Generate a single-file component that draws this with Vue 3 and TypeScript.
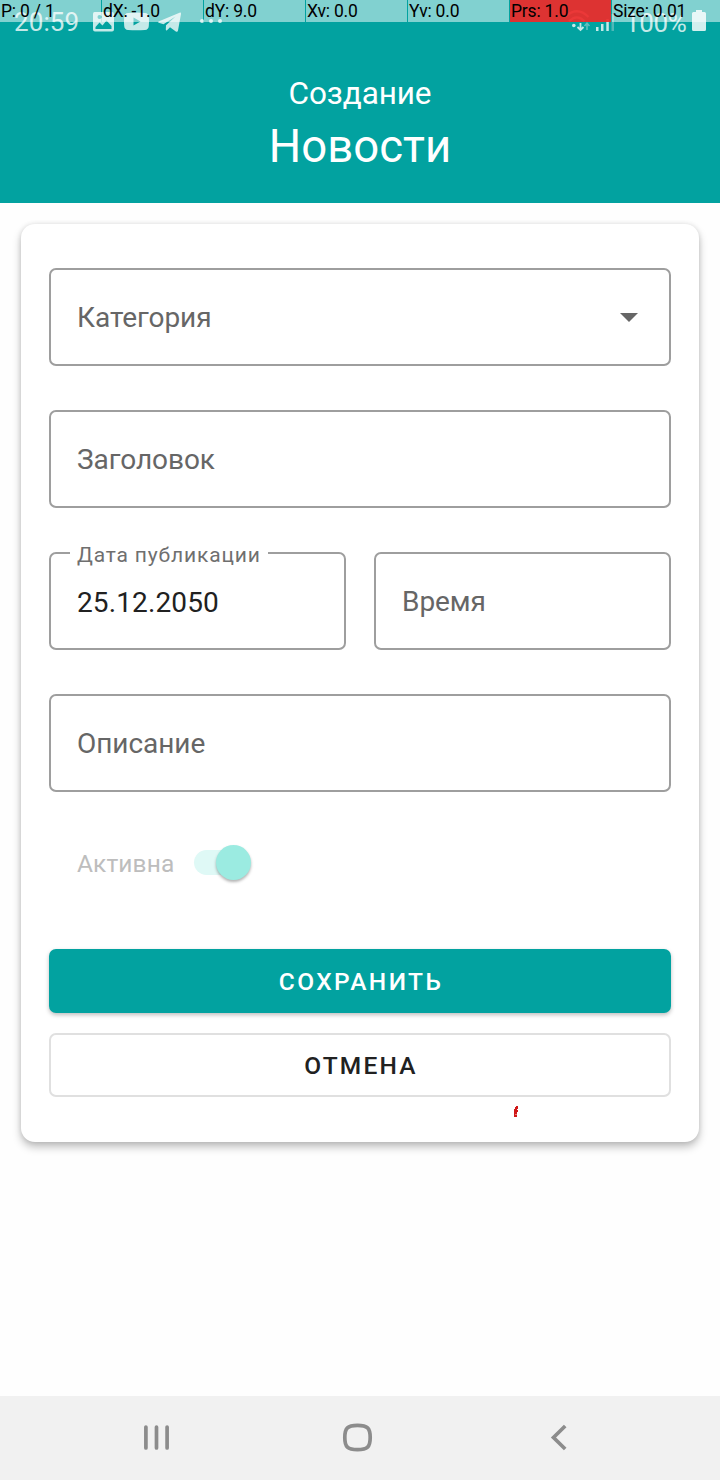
<script setup lang="ts">
interface Metric {
  text: string
  alert?: boolean
}

const metrics: Metric[] = [
  { text: 'P: 0 / 1' },
  { text: 'dX: -1.0' },
  { text: 'dY: 9.0' },
  { text: 'Xv: 0.0' },
  { text: 'Yv: 0.0' },
  { text: 'Prs: 1.0', alert: true },
  { text: 'Size: 0.01' },
]
</script>

<template>
  <div class="screen">
    <header class="header">
      <div class="status">
        <span class="clock">20:59</span>
        <svg class="status-left" width="140" height="40" viewBox="90 0 140 40">
          <path
            fill="#c4e9e8"
            fill-rule="evenodd"
            d="M94.500 12H112Q114 12 114 14V29.500Q114 31.500 112 31.500H95Q93 31.500 93 29.500V14Q93 12 94.500 12ZM95.500 29H111.500V26L106.500 20.500L102.500 25.500L99.500 22.500L95.500 27ZM99.500 15A2 2 0 1 0 99.500 19A2 2 0 1 0 99.500 15Z"
          />
          <path
            fill="#c4e9e8"
            fill-rule="evenodd"
            d="M128 13Q136.500 12 145 13Q148.500 13.300 148.800 17Q149.200 21.500 148.800 26Q148.500 29.700 145 30Q136.500 30.700 128 30Q124.500 29.700 124.200 26Q123.800 21.500 124.200 17Q124.500 13.300 128 13ZM133.500 17.500V25.500L140.500 21.500Z"
          />
          <path
            fill="#c4e9e8"
            d="M158.500 21.500L179.500 12.700Q181.300 12 181 14L178 30.500Q177.500 32.500 175.800 31.400L170 27.300L167 30.300Q166 31 165.800 29.500L166 25.300L175.500 16.600L163.500 24.300L158.700 22.800Q157.500 22.200 158.500 21.500Z"
          />
          <circle cx="202" cy="21" r="2" fill="#c4e9e8" />
          <circle cx="211" cy="21" r="2" fill="#c4e9e8" />
          <circle cx="220" cy="21" r="2" fill="#c4e9e8" />
        </svg>
        <svg class="status-signal" width="50" height="40" viewBox="566 0 50 40">
          <g fill="none" stroke="#c4e9e8" stroke-width="2.300">
            <path d="M565 17Q577 5.500 588.500 17" />
            <path d="M569 21.300Q577 13.500 584.500 21.300" />
          </g>
          <circle cx="573.800" cy="25.500" r="1.800" fill="#c4e9e8" />
          <path d="M580.500 23V30M577.500 27L580.500 30L583.500 27" fill="none" stroke="#c4e9e8" stroke-width="1.800" />
          <path d="M587 30V23M584.500 26L587 23.300L589.500 26" fill="none" stroke="#5fbfbe" stroke-width="1.600" />
          <path
            d="M596 27H598.500V31H596ZM601 24H603.500V31H601ZM606.300 19H608.800V31H606.300Z"
            fill="#c4e9e8"
          />
          <path d="M611.500 14H614V31H611.500Z" fill="#4fb9b8" />
        </svg>
        <span class="percent">100%</span>
        <svg class="battery" width="14" height="24" viewBox="0 0 14 24">
          <path d="M4 1H10V3H12.500Q14 3 14 4.500V20.500Q14 22 12.500 22H1.500Q0 22 0 20.500V4.500Q0 3 1.500 3H4Z" fill="#d3efee" />
        </svg>
      </div>
      <h1 class="heading">
        <span class="overline">Создание</span>
        <span class="title">Новости</span>
      </h1>
    </header>

    <div class="pointer-bar">
      <span v-for="m in metrics" :key="m.text" class="metric" :class="{ alert: m.alert }">{{ m.text }}</span>
    </div>

    <main class="content">
      <form class="card" @submit.prevent>
        <div class="field">
          <span class="hint">Категория</span>
          <svg class="caret" width="18" height="9" viewBox="0 0 18 9">
            <path d="M0 0H18L9 9Z" fill="#666" />
          </svg>
        </div>
        <div class="field"><span class="hint">Заголовок</span></div>
        <div class="row">
          <div class="field">
            <span class="label">Дата публикации</span>
            <span class="value">25.12.2050</span>
          </div>
          <div class="field"><span class="hint">Время</span></div>
        </div>
        <div class="field"><span class="hint">Описание</span></div>
        <div class="switch-row">
          <span class="switch-label">Активна</span>
          <span class="track"><span class="thumb"></span></span>
        </div>
        <button class="button primary" type="submit">СОХРАНИТЬ</button>
        <button class="button outlined" type="button">ОТМЕНА</button>
        <svg class="trace" width="6" height="13" viewBox="0 0 6 13" shape-rendering="crispEdges">
          <path d="M2 1H4V4H3V5H4V7H3V12H0V4H1V2H2Z" fill="#d01818" />
          <path d="M1 9H3V10H1Z" fill="#ee7777" />
        </svg>
      </form>
    </main>

    <nav class="nav">
      <svg width="720" height="84" viewBox="0 0 720 84" fill="none" stroke="#8c8c8c" stroke-width="3.700" stroke-linecap="round">
        <path d="M145.900 31V52M156.500 31V52M167.100 31V52" />
        <path d="M357.500 29.300C367.500 29.300 370.200 32 370.200 41.500C370.200 51 367.500 53.700 357.500 53.700C347.500 53.700 344.800 51 344.800 41.500C344.800 32 347.500 29.300 357.500 29.300Z" />
        <path d="M565.200 30L553.500 41.500L565.200 53" stroke-linecap="butt" />
      </svg>
    </nav>
  </div>
</template>

<style>
body {
  margin: 0;
  background: #fff;
}
</style>

<style scoped>
.screen {
  position: relative;
  display: flex;
  flex-direction: column;
  width: 720px;
  height: 1480px;
  overflow: hidden;
  background: #fefefe;
  font-family: Roboto, "Noto Sans", sans-serif;
}
.header {
  height: 203px;
  background: #02a2a0;
  color: #fff;
}
.status {
  position: relative;
  height: 42px;
  color: #c4e9e8;
  font-size: 26px;
  line-height: 30px;
}
.clock,
.percent,
.status-left,
.status-signal,
.battery {
  position: absolute;
  top: 0;
}
.clock {
  left: 14px;
  top: 7px;
  letter-spacing: 0.1px;
}
.status-left {
  left: 90px;
}
.status-signal {
  left: 566px;
}
.percent {
  left: 625px;
  top: 8px;
  letter-spacing: -0.4px;
}
.battery {
  left: 692px;
  top: 9px;
}
.heading {
  display: flex;
  flex-direction: column;
  align-items: center;
  margin: 0;
  padding-top: 33px;
  font-weight: 400;
}
.overline {
  font-size: 31.5px;
  line-height: 38px;
  letter-spacing: -0.1px;
}
.title {
  margin-top: 7px;
  font-size: 45.5px;
  line-height: 54px;
}
.pointer-bar {
  position: absolute;
  top: 0;
  left: 0;
  display: flex;
  gap: 1px;
  width: 720px;
  height: 22px;
}
.metric {
  box-sizing: border-box;
  flex: 0 0 101px;
  padding-left: 1px;
  background: rgba(255, 255, 255, 0.5);
  color: #000;
  font-size: 17.5px;
  line-height: 22px;
  letter-spacing: -0.2px;
  white-space: nowrap;
}
.metric:last-child {
  flex: 1;
}
.metric.alert {
  background: rgba(238, 42, 42, 0.93);
}
.content {
  flex: 1;
  padding: 21px 21px 0;
}
.card {
  position: relative;
  box-sizing: border-box;
  height: 918px;
  padding: 44px 28px 0;
  border-radius: 14px;
  background: #fff;
  box-shadow: 0 5px 9px rgba(0, 0, 0, 0.25), 0 0 5px rgba(0, 0, 0, 0.1);
}
.field {
  position: relative;
  box-sizing: border-box;
  display: flex;
  flex: 1;
  align-items: center;
  justify-content: space-between;
  height: 98px;
  margin-bottom: 44px;
  padding: 0 31px 0 26px;
  border: 2px solid #9e9e9e;
  border-radius: 7px;
}
.row {
  display: flex;
  gap: 28px;
}
.hint,
.value {
  padding-top: 2px;
  font-size: 28px;
  line-height: 34px;
}
.hint {
  color: #666;
  letter-spacing: -0.05px;
}
.value {
  padding-top: 4px;
  color: #212121;
  letter-spacing: 0.12px;
}
.label {
  position: absolute;
  top: -12px;
  left: 19px;
  padding: 0 7px;
  background: #fff;
  color: #6f6f6f;
  font-size: 21px;
  line-height: 26px;
  letter-spacing: 0.84px;
  white-space: nowrap;
}
.switch-row {
  display: flex;
  align-items: center;
  height: 54px;
  padding-left: 28px;
}
.switch-label {
  width: 117px;
  color: #bdbdbd;
  font-size: 24.5px;
  letter-spacing: 0.1px;
}
.track {
  position: relative;
  top: -1px;
  width: 56px;
  height: 25px;
  border-radius: 13px;
  background: #dff9f6;
}
.thumb {
  position: absolute;
  top: -5px;
  right: -1px;
  width: 35px;
  height: 35px;
  border-radius: 50%;
  background: #9bebe1;
  box-shadow: 0 2px 3px rgba(0, 0, 0, 0.3);
}
.button {
  box-sizing: border-box;
  display: block;
  width: 100%;
  height: 64px;
  padding: 0 0 0 2px;
  border: 0;
  border-radius: 7px;
  font-family: inherit;
  font-size: 24.5px;
  font-weight: 500;
  letter-spacing: 2.4px;
}
.primary {
  margin-top: 59px;
  background: #02a2a0;
  color: #fff;
  box-shadow: 0 2px 4px rgba(0, 0, 0, 0.26);
}
.outlined {
  margin-top: 20px;
  border: 2px solid #e0e0e0;
  background: #fff;
  color: #212121;
  letter-spacing: 2.2px;
}
.trace {
  position: absolute;
  left: 493px;
  top: 881px;
}
.nav {
  height: 84px;
  background: #f1f1f1;
}
.nav svg {
  display: block;
}
</style>
